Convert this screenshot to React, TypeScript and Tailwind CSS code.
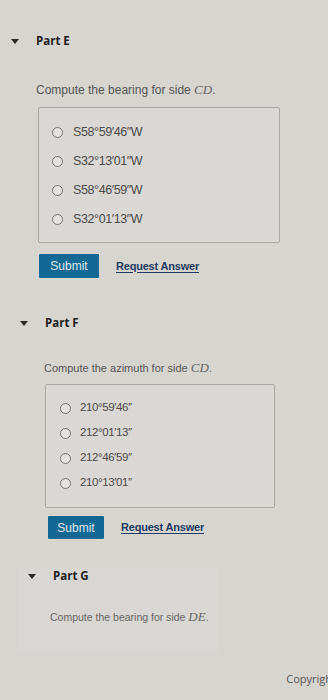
import type React from "react"

const Caret = () => (
  <svg width="8" height="5" viewBox="0 0 8 5" className="shrink-0">
    <path d="M0 0 L8 0 L4 5 Z" fill="#2a2a2a" />
  </svg>
)

const Math = ({ children }: { children: React.ReactNode }) => (
  <span className="italic text-[13px] text-[#666] [font-family:'Liberation_Serif','DejaVu_Serif',serif]">{children}</span>
)

const Radio = () => (
  <span className="inline-block w-[11px] h-[11px] rounded-full border border-[#777] bg-[#e4e3df] shrink-0" />
)

const Options = ({ items, gap, top, textGap, size }: { items: string[]; gap: string; top: string; textGap: string; size: string }) => (
  <div className={`flex flex-col ${gap} ${top}`}>
    {items.map((t) => (
      <div key={t} className={`flex items-center ${textGap} h-[14px]`}>
        <Radio />
        <span className={`${size} text-[#4a4a4a] tracking-[-0.4px]`}>{t}</span>
      </div>
    ))}
  </div>
)

const Buttons = ({ w, h }: { w: string; h: string }) => (
  <div className="flex items-center gap-[17px]">
    <button className={`${w} ${h} bg-[#106893] text-[#dfe9ef] text-[12px] rounded-[1px] flex items-center justify-center`}>
      Submit
    </button>
    <span className="text-[11px] font-bold text-[#243b63] underline underline-offset-2 tracking-[-0.2px]">Request Answer</span>
  </div>
)

const PartHeader = ({ label, left }: { label: string; left: number }) => (
  <div className="flex items-center h-4" style={{ paddingLeft: left }}>
    <Caret />
    <span className="ml-[17px] text-[11.5px] font-bold text-[#222] [font-family:'Open_Sans','Liberation_Sans',sans-serif]">{label}</span>
  </div>
)

export default function App() {
  return (
    <div className="w-[328px] h-[700px] overflow-hidden bg-[#d7d5d0] [font-family:'Liberation_Sans',Arial,sans-serif] flex flex-col">
      {/* Part E */}
      <div className="mt-[33px]">
        <PartHeader label="Part E" left={11} />
      </div>
      <div className="pl-[36px] mt-[33px] text-[12px] text-[#555] h-[16px] flex items-center whitespace-nowrap">
        <span>
          Compute the bearing for side <Math>CD</Math>.
        </span>
      </div>
      <div className="ml-[38px] mt-[9px] w-[242px] h-[136px] border border-[#a9a8a4] rounded-[2px] bg-[#dad8d4] pl-[13px]">
        <Options
          items={["S58°59′46″W", "S32°13′01″W", "S58°46′59″W", "S32°01′13″W"]}
          gap="gap-[15px]"
          top="pt-[17px]"
          textGap="gap-[10px]"
          size="text-[12.5px]"
        />
      </div>
      <div className="ml-[39px] mt-[11px]">
        <Buttons w="w-[60px]" h="h-[24px]" />
      </div>

      {/* Part F */}
      <div className="mt-[37px]">
        <PartHeader label="Part F" left={20} />
      </div>
      <div className="pl-[44px] mt-[29px] text-[11px] text-[#555] h-[16px] flex items-center whitespace-nowrap">
        <span>
          Compute the azimuth for side <Math>CD</Math>.
        </span>
      </div>
      <div className="ml-[45px] mt-[8px] w-[230px] h-[124px] border border-[#a9a8a4] rounded-[2px] bg-[#dad8d4] pl-[14px]">
        <Options
          items={["210°59′46″", "212°01′13″", "212°46′59″", "210°13′01″"]}
          gap="gap-[11px]"
          top="pt-[16px]"
          textGap="gap-[9px]"
          size="text-[11.5px]"
        />
      </div>
      <div className="ml-[48px] mt-[8px]">
        <Buttons w="w-[56px]" h="h-[23px]" />
      </div>

      {/* Part G */}
      <div className="mt-[28px] ml-[17px] mr-[110px] bg-[#d9d7d3] pt-[1px] pb-[28px]">
        <PartHeader label="Part G" left={11} />
        <div className="pl-[33px] mt-[25px] text-[10.5px] text-[#666] h-[16px] flex items-center whitespace-nowrap">
          <span>
            Compute the bearing for side <Math>DE</Math>.
          </span>
        </div>
      </div>
      <div className="flex justify-end mt-[18px] overflow-hidden">
        <span className="text-[11px] text-[#555] whitespace-nowrap -mr-[8px] [font-family:'Open_Sans','Liberation_Sans',sans-serif]">Copyright</span>
      </div>
    </div>
  )
}
